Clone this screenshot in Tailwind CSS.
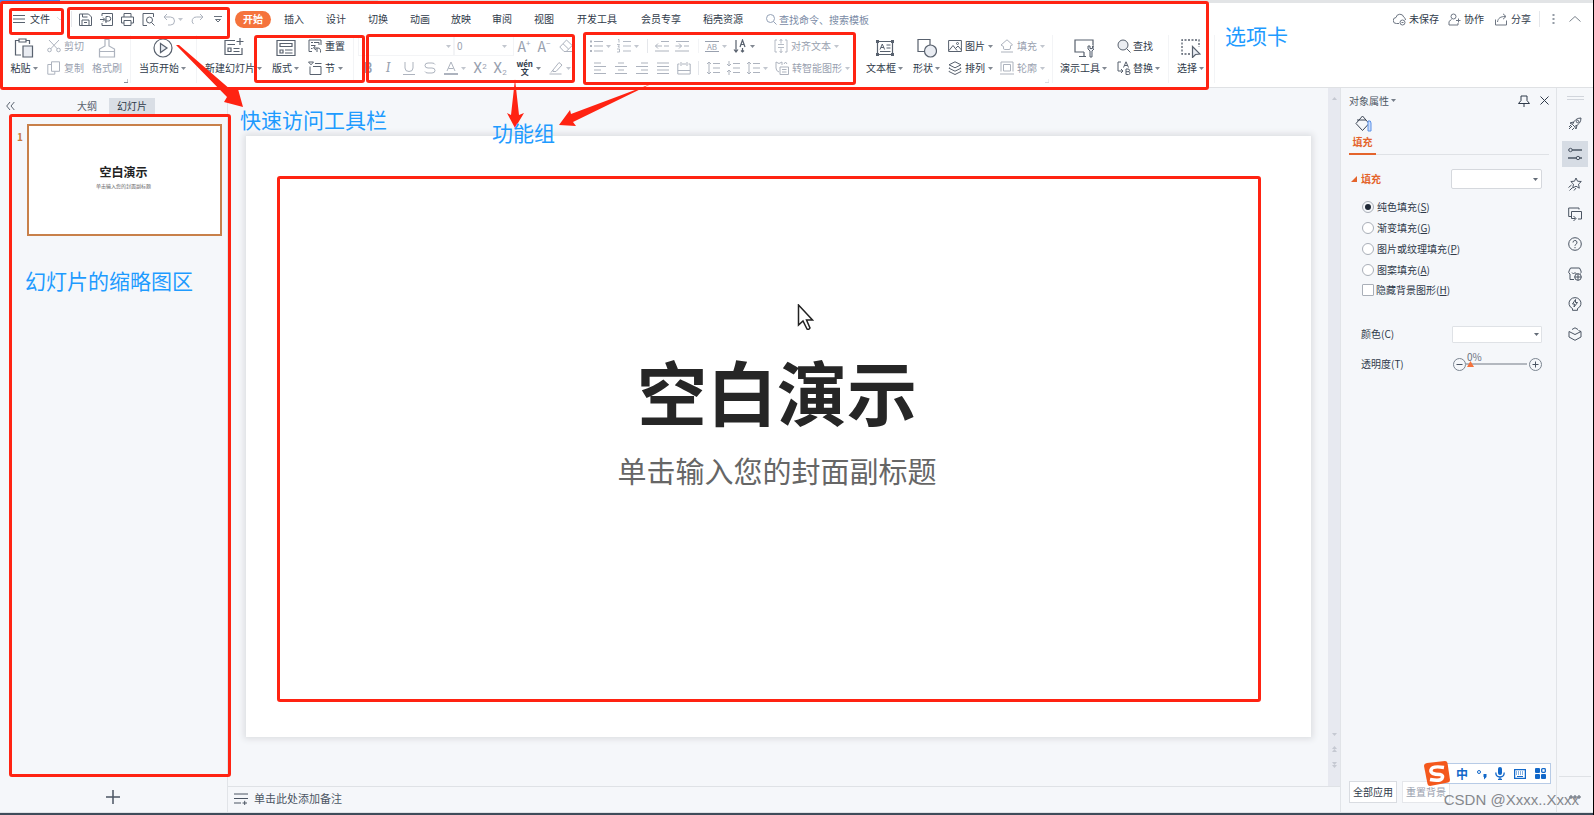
<!DOCTYPE html>
<html lang="zh-CN">
<head>
<meta charset="utf-8">
<title>演示文稿</title>
<script src="https://cdn.jsdelivr.net/npm/@tailwindcss/browser@4"></script>
</head>
<body class="relative flex h-screen flex-col overflow-hidden border-r border-black bg-[#f5f7fa] font-['Noto_Sans_CJK_SC',sans-serif] text-[10px] leading-none text-[#2f3a4a]">

<!-- Icon sheet -->
<svg class="hidden" aria-hidden="true">
  <symbol id="caret" viewBox="0 0 5 3"><path d="M0 0h5L2.500 3z" fill="currentColor" fill-opacity=".75"/></symbol>
  <symbol id="menu" viewBox="0 0 12 10"><path d="M0 1.500h12M0 5h12M0 8.500h12" fill="none" stroke="currentColor"/></symbol>
  <symbol id="save" viewBox="0 0 13 13"><path d="M.5 1h9l3 3v8.500H.5zM3 12.500V7h7v5.500M3.500 1v3h5M5 9.500h3" fill="none" stroke="currentColor"/></symbol>
  <symbol id="pdf" viewBox="0 0 13 13"><path d="M2 3V.5h10.500v12H2V10M0 6.500h4.500M3 4.500l2 2-2 2M6 10V3.500h2.500a2 2 0 0 1 0 4.500H5" fill="none" stroke="currentColor"/></symbol>
  <symbol id="print" viewBox="0 0 13 13"><path d="M3 4V.5h7V4M3 10H.5V4h12v6H10M3 7.500h7v5H3z" fill="none" stroke="currentColor"/></symbol>
  <symbol id="preview" viewBox="0 0 13 13"><path d="M11.500 4V.5H1v12h4M9.500 9.500l3 3" fill="none" stroke="currentColor"/><circle cx="7.500" cy="7" r="3" fill="none" stroke="currentColor"/></symbol>
  <symbol id="undo" viewBox="0 0 13 13"><path d="M4 1L1 4l3 3M1 4h6.500a4 4 0 0 1 0 8H5" fill="none" stroke="currentColor"/></symbol>
  <symbol id="redo" viewBox="0 0 13 13"><path d="M9 1l3 3-3 3M12 4H5.500a4 4 0 0 0-3 7" fill="none" stroke="currentColor"/></symbol>
  <symbol id="more" viewBox="0 0 8 8"><path d="M0 1.500h8M1.500 4.500h5L4 7z" fill="none" stroke="currentColor" stroke-width=".9"/></symbol>
  <symbol id="search" viewBox="0 0 14 14"><circle cx="6" cy="6" r="5" fill="#e8ebef" stroke="currentColor"/><path d="M9.700 9.700L13.500 13.500" stroke="currentColor"/></symbol>
  <symbol id="cloud" viewBox="0 0 13 13"><path d="M6 10.500H3.500a3 3 0 0 1-.5-6 4 4 0 0 1 7.800-.3A3 3 0 0 1 12.500 7" fill="none" stroke="currentColor"/><circle cx="9.500" cy="9.500" r="2.500" fill="none" stroke="currentColor"/><path d="M8.500 9.500h2" stroke="currentColor"/></symbol>
  <symbol id="people" viewBox="0 0 13 13"><circle cx="5.500" cy="3.500" r="2.500" fill="none" stroke="currentColor"/><path d="M3.500 6.500L1 8.500v3.500h9V10M8 7.500h4.500M10.500 5.500v4" fill="none" stroke="currentColor"/></symbol>
  <symbol id="share" viewBox="0 0 13 13"><path d="M.5 6.500V12h11V7.500M2.500 9c.5-4 3-5.500 8-5.500M8 .8l3 2.700-3 2.700" fill="none" stroke="currentColor"/></symbol>
  <symbol id="paste" viewBox="0 0 20 20"><path d="M7 17H1.500V2.500H5M12 2.500h3.500V6M5 1h7v3H5z" fill="none" stroke="currentColor" stroke-width="1.200"/><path d="M9 8h9.500v11H9z" fill="#e4e8f0" stroke="currentColor" stroke-width="1.200"/></symbol>
  <symbol id="cut" viewBox="0 0 14 14"><path d="M2 1l8.500 9M12 1L3.500 10" fill="none" stroke="currentColor"/><circle cx="2.500" cy="11" r="1.800" fill="none" stroke="currentColor"/><circle cx="11.500" cy="11" r="1.800" fill="none" stroke="currentColor"/></symbol>
  <symbol id="copy" viewBox="0 0 14 14"><path d="M4 3.500H.8v9.700h7V10.500M4.500.8h8v9.500h-8z" fill="none" stroke="currentColor"/></symbol>
  <symbol id="brush" viewBox="0 0 20 20"><path d="M8 8V1.500h4V8l5.500 3v8h-15v-8zM2.500 13.500h15" fill="none" stroke="currentColor" stroke-width="1.200"/></symbol>
  <symbol id="play" viewBox="0 0 20 20"><circle cx="10" cy="10" r="9" fill="none" stroke="currentColor" stroke-width="1.200"/><path d="M7.500 5.500l6.500 4.500-6.500 4.500z" fill="#e4e8f0" stroke="currentColor" stroke-width="1.200"/></symbol>
  <symbol id="newslide" viewBox="0 0 20 20"><path d="M11 2.500H1v14h17V10M3.500 6.500H11M4 10h3v3.500H4zM9.500 10.500h6M9.500 13.500h6M16 0v7M12.500 3.500h7" fill="none" stroke="currentColor" stroke-width="1.200"/></symbol>
  <symbol id="layout" viewBox="0 0 20 20"><path d="M1 2.500h18v15H1zM4 5.500h12v3H4zM4 12h3v3H4zM9 12h7.500M9 15h7.500" fill="none" stroke="currentColor" stroke-width="1.200"/></symbol>
  <symbol id="reset" viewBox="0 0 14 14"><path d="M4 12.500H1V1h12v5M3 3.500h2M6 3.500h5V6M3 6.500h4M3 9.500h1.500M7.500 6.500L5.500 9l2.500 2M6 9h4q3 0 2.500 4.500M9 13V9" fill="none" stroke="currentColor"/></symbol>
  <symbol id="section" viewBox="0 0 14 14"><path d="M.5 1h5L3 3.800zM7 2.500h6.500M2 5.500v8h11v-8H5" fill="none" stroke="currentColor"/></symbol>
  <symbol id="eraser" viewBox="0 0 14 14"><path d="M.8 8L7.500 1l5.700 5.500-6 6H5zM4 4.700l5.700 5.500M5 12.500h8" fill="none" stroke="currentColor"/></symbol>
  <symbol id="marker" viewBox="0 0 14 14"><path d="M4 9l6-7.500L13 4 7 10.500H4zM.5 13h12M4 9l-2 2.500" fill="none" stroke="currentColor"/></symbol>
  <symbol id="underline" viewBox="0 0 14 14"><path d="M3 1v6q0 3.500 4 3.500T11 7V1M1 13.500h12" fill="none" stroke="currentColor"/></symbol>
  <symbol id="strike" viewBox="0 0 14 14"><path d="M12 3.500Q11.500 2 9 2H5Q2 2 2 4.500T5 7h4q3 0 3 2.500T9 12H5q-2.500 0-3-1.500" fill="none" stroke="currentColor"/></symbol>
  <symbol id="fontcolor" viewBox="0 0 14 14"><path d="M3 10L7 1l4 9M4.500 7.500h5" fill="none" stroke="currentColor"/><path d="M0 12h14v2H0z" fill="currentColor"/></symbol>
  <symbol id="bullets" viewBox="0 0 14 14"><path d="M5 2.500h9M5 7h9M5 12h9" stroke="currentColor"/><path d="M1 1.500h2v2H1zM1 6h2v2H1zM1 11h2v2H1z" fill="currentColor"/></symbol>
  <symbol id="numbers" viewBox="0 0 14 14"><path d="M6 2.500h8M6 7h8M6 12h8M1 .5h1v3M0 5.500h2.500L1 8h2M0 10h2.500v3H0" fill="none" stroke="currentColor" stroke-width=".9"/></symbol>
  <symbol id="outdent" viewBox="0 0 14 14"><path d="M6 2.500h8M0 12h14M9 7h5M.5 7h6.500M3 4.500L.5 7 3 9.500" fill="none" stroke="currentColor"/></symbol>
  <symbol id="indent" viewBox="0 0 14 14"><path d="M1 2.500h13M0 12h14M9 7h5M.5 7h6M4 4.500L6.500 7 4 9.500" fill="none" stroke="currentColor"/></symbol>
  <symbol id="sort" viewBox="0 0 14 14"><path d="M3 1v12M1 10.500l2 2.500 2-2.500M7 8l2.500-7L12 8M8 5.500h3.500M9.500 9v4M8 11.500l1.500 1.500 1.500-1.500" fill="none" stroke="currentColor" stroke-width="1.200"/></symbol>
  <symbol id="valign" viewBox="0 0 14 14"><path d="M3 1H1v12h2M11 1h2v12h-2M7 0v4.500M5.500 2L7 .5 8.500 2M7 9.500V14M5.500 12L7 13.500 8.500 12M4 5.500h6M4 8.500h6" fill="none" stroke="currentColor" stroke-width=".9"/></symbol>
  <symbol id="left" viewBox="0 0 14 14"><path d="M1 2h7M1 5.500h12M1 9h7M1 12.500h12" stroke="currentColor"/></symbol>
  <symbol id="center" viewBox="0 0 14 14"><path d="M4 2h6M1 5.500h12M4 9h6M1 12.500h12" stroke="currentColor"/></symbol>
  <symbol id="right" viewBox="0 0 14 14"><path d="M6 2h7M1 5.500h12M6 9h7M1 12.500h12" stroke="currentColor"/></symbol>
  <symbol id="justify" viewBox="0 0 14 14"><path d="M1 2h12M1 5.500h12M1 9h12M1 12.500h12" stroke="currentColor"/></symbol>
  <symbol id="distribute" viewBox="0 0 14 14"><path d="M2.500 3H.8v10h12.400V3h-1.700M.8 9.500h12.400M5 3h4M4 1v4M10 1v4" fill="none" stroke="currentColor"/></symbol>
  <symbol id="spacing" viewBox="0 0 14 14"><path d="M7 2.500h7M7 7h7M7 11.500h7M3 1v12M1 3l2-2 2 2M1 11l2 2 2-2" fill="none" stroke="currentColor"/></symbol>
  <symbol id="spacing2" viewBox="0 0 14 14"><path d="M7 2.500h7M7 7h7M7 11.500h7M3 0v5M1 3l2 2 2-2M3 14V9M1 11l2-2 2 2" fill="none" stroke="currentColor"/></symbol>
  <symbol id="smart" viewBox="0 0 14 14"><path d="M4 11Q1 10 1 7V1l3 1.500L7 1v3M5 6h8.500v7.500H5zM7 8.500h4.500M7 11h4.500M9 3l1.500-2L12 3" fill="none" stroke="currentColor"/></symbol>
  <symbol id="textbox" viewBox="0 0 20 20"><path d="M2.500 3.500h15v13h-15z" fill="none" stroke="currentColor" stroke-width="1.200"/><path d="M1 2h3v3H1zM16 2h3v3h-3zM1 15h3v3H1zM16 15h3v3h-3z" fill="currentColor"/><path d="M5 11.500L7.300 6l2.300 5.500M6 9.500h3M11.500 7h4M11.500 10h4M5 13.500h10.500" fill="none" stroke="currentColor"/></symbol>
  <symbol id="shape" viewBox="0 0 20 20"><path d="M1 1.500h12v12H1z" fill="none" stroke="currentColor" stroke-width="1.200"/><circle cx="13.500" cy="13" r="6" fill="#e4e8f0" stroke="currentColor" stroke-width="1.200"/></symbol>
  <symbol id="picture" viewBox="0 0 14 14"><path d="M.6 1.500h12.800v11H.6zM1 11.500l4-5 4 5M8 9l2-2 3.500 4" fill="none" stroke="currentColor"/><circle cx="9.500" cy="4.500" r="1" fill="none" stroke="currentColor"/></symbol>
  <symbol id="layers" viewBox="0 0 14 14"><path d="M7 .8l6 3-6 3-6-3zM1.500 6.500L1 7.200l6 3 6-3-.5-.7M1.500 9.800l-.5.700 6 3 6-3-.5-.7" fill="none" stroke="currentColor"/></symbol>
  <symbol id="fill" viewBox="0 0 14 14"><path d="M5 2.500L7 .8l5.500 5-2 1V9q0 1.500-1.500 1.500H4.500Q3.500 10.500 3.500 9V7.500L1 6zM1 13h12" fill="none" stroke="currentColor"/></symbol>
  <symbol id="outline" viewBox="0 0 14 14"><path d="M1 10.500V1h12v9.500M3.500 10V3.500h7V10zM0 13h14" fill="none" stroke="currentColor"/></symbol>
  <symbol id="tools" viewBox="0 0 20 20"><path d="M10 14H1V2h18v5M10 14v4.500M5 18.500h7" fill="none" stroke="currentColor" stroke-width="1.200"/><path d="M14 8v3l2 2v6h2v-6l2-2V8l-1.500 0v2.500h-2.500V8z" fill="#e4e8f0" stroke="currentColor"/></symbol>
  <symbol id="replace" viewBox="0 0 14 14"><path d="M4 1H1v9h5M4 8l2 2-2 2M6.500 6.500L9 .8l2.500 5.700M7.300 4.500h3.400M9 8v5.500h2.500q1.500 0 1.500-1.400t-1.500-1.400H9M9 8h2q1.500 0 1.500 1.300T11 10.700" fill="none" stroke="currentColor"/></symbol>
  <symbol id="select" viewBox="0 0 20 20"><path d="M9 16H1V2h17v7" fill="none" stroke="currentColor" stroke-width="1.300" stroke-dasharray="2 1.500"/><path d="M11.500 8.500v11l3-3 4.500-.5z" fill="#e4e8f0" stroke="currentColor" stroke-width="1.200"/></symbol>
  <symbol id="corner" viewBox="0 0 4 4"><path d="M4 0v3.500H0" fill="none" stroke="currentColor"/></symbol>
</svg>

<!-- Window strip -->
<div class="flex h-[3px] shrink-0 bg-[#e2e4e6]"><div class="w-15 bg-[#4a86f0]"></div><div class="w-[318px] bg-[#d4d8dc]"></div></div>

<header class="shrink-0 border-b border-[#dfe1e4] bg-white [&_svg]:opacity-80">
  <!-- Menu and tabs -->
  <div class="flex h-8 items-center pl-[13px]">
    <button class="flex items-center gap-[5px]"><svg class="h-[10px] w-3"><use href="#menu"/></svg>文件</button>
    <svg class="ml-[7px] h-1 w-[6px] text-gray-300" viewBox="0 0 6 4"><path d="M0 0l3 3 3-3" fill="none" stroke="currentColor"/></svg>
    <i class="ml-2 h-4 w-px bg-gray-200"></i>
    <div class="ml-[7px] flex items-center gap-2">
      <button aria-label="保存"><svg class="block size-[13px]"><use href="#save"/></svg></button>
      <button aria-label="输出为PDF"><svg class="block size-[13px]"><use href="#pdf"/></svg></button>
      <button aria-label="打印"><svg class="block size-[13px]"><use href="#print"/></svg></button>
      <button aria-label="打印预览"><svg class="block size-[13px]"><use href="#preview"/></svg></button>
      <button aria-label="撤销" class="flex items-center gap-[2px] text-gray-400"><svg class="block size-[13px]"><use href="#undo"/></svg><svg class="h-[3px] w-[5px]"><use href="#caret"/></svg></button>
      <button aria-label="恢复" class="text-gray-400"><svg class="block size-[13px]"><use href="#redo"/></svg></button>
    </div>
    <button aria-label="自定义" class="ml-[10px]"><svg class="block size-2"><use href="#more"/></svg></button>
    <nav class="ml-[13px] flex items-center">
      <button class="mr-[2px] h-[17px] w-9 rounded-full bg-[#f5733c] font-bold text-white">开始</button>
      <button class="px-[11px]">插入</button><button class="px-[11px]">设计</button><button class="px-[11px]">切换</button><button class="px-[11px]">动画</button><button class="px-[10px]">放映</button><button class="px-[11px]">审阅</button><button class="px-[11px]">视图</button><button class="px-[12px]">开发工具</button><button class="px-[12px]">会员专享</button><button class="px-[10px]">稻壳资源</button>
    </nav>
    <label class="ml-[13px] flex items-center gap-[2px] text-[#7a8aa5]"><svg class="size-[11px]" viewBox="0 0 11 11"><circle cx="4.500" cy="4.500" r="4" fill="none" stroke="currentColor"/><path d="M7.500 7.500l3 3" stroke="currentColor"/></svg><input aria-label="查找" placeholder="查找命令、搜索模板" class="w-28 outline-none placeholder:text-[#7a8aa5]"></label>
    <div class="ml-auto flex items-center pr-3">
      <button class="flex items-center gap-[3px]"><svg class="size-[13px] text-gray-600"><use href="#cloud"/></svg>未保存</button>
      <button class="ml-[9px] flex items-center gap-[3px]"><svg class="size-[13px] text-gray-600"><use href="#people"/></svg>协作</button>
      <button class="ml-[11px] flex items-center gap-[3px]"><svg class="size-[13px] text-gray-600"><use href="#share"/></svg>分享</button>
      <i class="ml-2 h-4 w-px bg-gray-200"></i>
      <button aria-label="更多" class="ml-3"><svg class="block h-3 w-[3px]" viewBox="0 0 3 12"><path d="M.5 1h2v2h-2zM.5 5h2v2h-2zM.5 9h2v2h-2z" fill="#7b8490"/></svg></button>
      <button aria-label="折叠功能区" class="ml-[14px]"><svg class="block h-[6px] w-3" viewBox="0 0 12 6"><path d="M.5 5.500L6 .5l5.500 5" fill="none" stroke="#5b6470"/></svg></button>
    </div>
  </div>

  <!-- Ribbon -->
  <div class="flex h-[52px] pl-2">
    <button class="flex w-8 flex-col items-center pt-[3px]"><svg class="size-5"><use href="#paste"/></svg><span class="flex h-5 items-center gap-[2px]">粘贴<svg class="h-[3px] w-[5px]"><use href="#caret"/></svg></span></button>
    <div class="ml-[7px] flex flex-col text-gray-400">
      <button class="flex h-[22px] items-center gap-[3px]"><svg class="size-[14px]"><use href="#cut"/></svg>剪切</button>
      <button class="flex h-[22px] items-center gap-[3px]"><svg class="size-[14px]"><use href="#copy"/></svg>复制</button>
    </div>
    <button class="ml-2 flex flex-col items-center pt-[3px] text-gray-400"><svg class="size-5"><use href="#brush"/></svg><span class="flex h-5 items-center">格式刷</span></button>
    <div class="flex h-12 w-2 items-end pl-[2px]"><svg class="size-1 text-gray-500"><use href="#corner"/></svg></div><i class="h-12 w-px bg-gray-100"></i>
    <button class="ml-2 flex flex-col items-center pt-[3px]"><svg class="size-5"><use href="#play"/></svg><span class="flex h-5 items-center gap-[2px]">当页开始<svg class="h-[3px] w-[5px]"><use href="#caret"/></svg></span></button>
    <i class="ml-[10px] h-12 w-px bg-gray-100"></i>
    <button class="ml-2 flex flex-col items-center pt-[3px]"><svg class="size-5"><use href="#newslide"/></svg><span class="flex h-5 items-center gap-[2px]">新建幻灯片<svg class="h-[3px] w-[5px]"><use href="#caret"/></svg></span></button>
    <button class="ml-[10px] flex flex-col items-center pt-[3px]"><svg class="size-5"><use href="#layout"/></svg><span class="flex h-5 items-center gap-[2px]">版式<svg class="h-[3px] w-[5px]"><use href="#caret"/></svg></span></button>
    <div class="ml-[9px] flex flex-col">
      <button class="flex h-[22px] items-center gap-[3px]"><svg class="size-[14px]"><use href="#reset"/></svg>重置</button>
      <button class="flex h-[22px] items-center gap-[3px]"><svg class="size-[14px]"><use href="#section"/></svg>节<svg class="h-[3px] w-[5px]"><use href="#caret"/></svg></button>
    </div>
    <i class="ml-2 h-12 w-px bg-gray-100"></i>

    <!-- Font group -->
    <div class="ml-1 w-[220px] text-gray-400">
      <div class="flex h-[22px] items-center">
        <label class="relative flex h-5 w-24 items-center border border-gray-100"><select aria-label="字体" class="h-full w-full appearance-none"><option></option></select><svg class="pointer-events-none absolute right-[2px] h-[3px] w-[5px]"><use href="#caret"/></svg></label>
        <label class="relative flex h-5 w-15 items-center border border-gray-100"><select aria-label="字号" class="h-full w-full appearance-none pl-[2px]"><option>0</option></select><svg class="pointer-events-none absolute right-[6px] h-[3px] w-[5px]"><use href="#caret"/></svg></label>
        <button aria-label="增大字号" class="flex w-5 items-start justify-center text-[14px]">A<span class="text-[8px]">+</span></button>
        <button aria-label="减小字号" class="flex w-5 items-start justify-center text-[14px]">A<span class="text-[8px]">−</span></button>
        <button aria-label="清除格式" class="flex w-6 justify-center"><svg class="size-[14px]"><use href="#eraser"/></svg></button>
      </div>
      <div class="flex h-[22px] items-center font-[Roboto] text-[14px]">
        <button class="w-5 font-medium">B</button><button class="w-5 font-serif italic">I</button>
        <button aria-label="下划线" class="flex w-[21px] justify-center"><svg class="size-[14px]"><use href="#underline"/></svg></button>
        <button aria-label="删除线" class="flex w-[21px] justify-center"><svg class="size-[14px]"><use href="#strike"/></svg></button>
        <button aria-label="字体颜色" class="flex w-[30px] items-center justify-center gap-[3px]"><svg class="size-[14px]"><use href="#fontcolor"/></svg><svg class="h-[3px] w-[5px]"><use href="#caret"/></svg></button>
        <button class="w-5">X<sup class="text-[8px]">2</sup></button><button class="w-5">X<sub class="text-[8px]">2</sub></button>
        <button class="flex w-9 items-center justify-end gap-[3px] pr-[5px] text-[#2f3a4a]"><span class="flex flex-col items-center font-['Noto_Sans_CJK_SC'] text-[8px] leading-[8px] font-bold"><span>wén</span><span>文</span></span><svg class="h-[3px] w-[5px]"><use href="#caret"/></svg></button>
        <button aria-label="突出显示" class="flex w-7 items-center justify-center gap-[3px]"><svg class="size-[14px]"><use href="#marker"/></svg><svg class="h-[3px] w-[5px]"><use href="#caret"/></svg></button>
      </div>
    </div>

    <!-- Paragraph group -->
    <div class="ml-2 text-gray-400">
      <div class="flex h-[22px] items-center">
        <button aria-label="项目符号" class="flex w-7 items-center justify-center gap-[3px]"><svg class="size-[14px]"><use href="#bullets"/></svg><svg class="h-[3px] w-[5px]"><use href="#caret"/></svg></button>
        <button aria-label="编号" class="flex w-7 items-center justify-center gap-[3px]"><svg class="size-[14px]"><use href="#numbers"/></svg><svg class="h-[3px] w-[5px]"><use href="#caret"/></svg></button>
        <i class="ml-[5px] h-[14px] w-px bg-gray-200"></i>
        <button aria-label="减少缩进" class="ml-[3px] flex w-[21px] justify-center"><svg class="size-[14px]"><use href="#outdent"/></svg></button>
        <button aria-label="增加缩进" class="flex w-5 justify-center"><svg class="size-[14px]"><use href="#indent"/></svg></button>
        <i class="ml-[6px] h-[14px] w-px bg-gray-100"></i>
        <button aria-label="字符间距" class="ml-[3px] flex w-7 items-center justify-center gap-[3px]"><span class="w-[14px] border-y text-[8px] leading-[9px]">AB</span><svg class="h-[3px] w-[5px]"><use href="#caret"/></svg></button>
        <button aria-label="文字方向" class="flex w-7 items-center justify-center gap-[3px] text-[#2f3a4a]"><svg class="size-[14px]"><use href="#sort"/></svg><svg class="h-[3px] w-[5px]"><use href="#caret"/></svg></button>
        <button class="ml-4 flex items-center gap-[3px]"><svg class="size-[14px]"><use href="#valign"/></svg>对齐文本<svg class="h-[3px] w-[5px]"><use href="#caret"/></svg></button>
      </div>
      <div class="flex h-[22px] items-center pl-[3px]">
        <button aria-label="左对齐" class="flex w-[21px] justify-center"><svg class="size-[14px]"><use href="#left"/></svg></button>
        <button aria-label="居中" class="flex w-[21px] justify-center"><svg class="size-[14px]"><use href="#center"/></svg></button>
        <button aria-label="右对齐" class="flex w-[21px] justify-center"><svg class="size-[14px]"><use href="#right"/></svg></button>
        <button aria-label="两端对齐" class="flex w-[21px] justify-center"><svg class="size-[14px]"><use href="#justify"/></svg></button>
        <button aria-label="分散对齐" class="flex w-[21px] justify-center"><svg class="size-[14px]"><use href="#distribute"/></svg></button>
        <i class="ml-1 h-[14px] w-px bg-gray-200"></i>
        <button aria-label="增大段距" class="ml-[3px] flex w-[21px] justify-center"><svg class="size-[14px]"><use href="#spacing"/></svg></button>
        <button aria-label="减小段距" class="flex w-5 justify-center"><svg class="size-[14px]"><use href="#spacing2"/></svg></button>
        <button aria-label="行距" class="flex w-7 items-center justify-center gap-[3px]"><svg class="size-[14px]"><use href="#spacing"/></svg><svg class="h-[3px] w-[5px]"><use href="#caret"/></svg></button>
        <button class="ml-1 flex items-center gap-[3px]"><svg class="size-[14px]"><use href="#smart"/></svg>转智能图形<svg class="h-[3px] w-[5px]"><use href="#caret"/></svg></button>
      </div>
    </div>

    <!-- Drawing group -->
    <button class="ml-4 flex flex-col items-center pt-[3px]"><svg class="size-5"><use href="#textbox"/></svg><span class="flex h-5 items-center gap-[2px]">文本框<svg class="h-[3px] w-[5px]"><use href="#caret"/></svg></span></button>
    <button class="ml-[10px] flex flex-col items-center pt-[3px]"><svg class="size-5"><use href="#shape"/></svg><span class="flex h-5 items-center gap-[2px]">形状<svg class="h-[3px] w-[5px]"><use href="#caret"/></svg></span></button>
    <div class="ml-2">
      <button class="flex h-[22px] items-center gap-[3px]"><svg class="size-[14px]"><use href="#picture"/></svg>图片<svg class="h-[3px] w-[5px]"><use href="#caret"/></svg></button>
      <button class="flex h-[22px] items-center gap-[3px]"><svg class="size-[14px]"><use href="#layers"/></svg>排列<svg class="h-[3px] w-[5px]"><use href="#caret"/></svg></button>
    </div>
    <div class="ml-[7px] text-gray-400">
      <button class="flex h-[22px] items-center gap-[3px]"><svg class="size-[14px]"><use href="#fill"/></svg>填充<svg class="h-[3px] w-[5px]"><use href="#caret"/></svg></button>
      <button class="flex h-[22px] items-center gap-[3px]"><svg class="size-[14px]"><use href="#outline"/></svg>轮廓<svg class="h-[3px] w-[5px]"><use href="#caret"/></svg></button>
    </div>
    <div class="flex h-12 w-[7px] items-end"><svg class="size-1 text-gray-300"><use href="#corner"/></svg></div><i class="h-12 w-px bg-gray-100"></i>
    <button class="ml-[7px] flex flex-col items-center pt-[3px]"><svg class="size-5"><use href="#tools"/></svg><span class="flex h-5 items-center gap-[2px]">演示工具<svg class="h-[3px] w-[5px]"><use href="#caret"/></svg></span></button>
    <div class="ml-[10px]">
      <button class="flex h-[22px] items-center gap-[2px]"><svg class="size-[14px]"><use href="#search"/></svg>查找</button>
      <button class="flex h-[22px] items-center gap-[2px]"><svg class="size-[14px]"><use href="#replace"/></svg>替换<svg class="h-[3px] w-[5px]"><use href="#caret"/></svg></button>
    </div>
    <i class="ml-[8px] h-12 w-px bg-gray-100"></i>
    <button class="ml-2 flex flex-col items-center pt-[3px]"><svg class="size-5"><use href="#select"/></svg><span class="flex h-5 items-center gap-[2px]">选择<svg class="h-[3px] w-[5px]"><use href="#caret"/></svg></span></button>
    <i class="ml-[10px] h-12 w-px bg-gray-100"></i>
  </div>
</header>

<div class="flex min-h-0 flex-1 border-b border-[#dfe2e6]">
  <!-- Slide list -->
  <aside class="flex w-[228px] shrink-0 flex-col border-r border-[#e1e4e8]">
    <div class="flex h-9 items-center pl-[6px]">
      <button aria-label="收起"><svg class="block h-2 w-[9px]" viewBox="0 0 9 8"><path d="M4 0L.7 4 4 8M8.300 0L5 4l3.300 4" fill="none" stroke="#5b6470"/></svg></button>
      <button class="ml-[62px] text-[#5b6470]">大纲</button>
      <button class="ml-3 h-4 w-[46px] bg-[#d9dee5]">幻灯片</button>
    </div>
    <div class="flex pl-[17px]">
      <span class="w-[10px] pt-2 font-bold text-[#c97a3a]">1</span>
      <div class="flex h-28 w-[195px] flex-col items-center border-2 border-[#c8804a] bg-white pt-10 pr-[2px]">
        <div class="text-[12px] font-bold text-[#222]">空白演示</div>
        <div class="mt-[5px] text-[5px] text-[#666]">单击输入您的封面副标题</div>
      </div>
    </div>
    <button aria-label="新建幻灯片" class="mt-auto flex h-[30px] items-center justify-center pr-[2px]"><svg class="size-[14px]" viewBox="0 0 14 14"><path d="M7 0v14M0 7h14" stroke="#4b5563" stroke-width="1.500"/></svg></button>
  </aside>

  <!-- Editing area -->
  <main class="flex min-w-0 flex-1 flex-col">
    <div class="flex min-h-0 flex-1">
      <div class="flex flex-1 pt-12 pr-[17px] pb-[49px] pl-[18px]">
        <section class="flex flex-1 flex-col items-center bg-white pt-[220px] pr-[3px] shadow-[0_0_6px_2px_#dcdee1]">
          <h1 class="text-[70px] font-bold text-[#262626]">空白演示</h1>
          <p class="mt-[30px] text-[29px] text-[#666]">单击输入您的封面副标题</p>
        </section>
      </div>
      <div class="flex w-3 flex-col items-center bg-[#e7e9f0] pt-[9px] pb-[18px] text-[#b9bec8]">
        <svg class="h-[3px] w-[5px] rotate-180"><use href="#caret"/></svg>
        <svg class="mt-auto h-[3px] w-[5px]"><use href="#caret"/></svg>
        <svg class="mt-[10px] h-[3px] w-[5px] rotate-180"><use href="#caret"/></svg><svg class="h-[3px] w-[5px] rotate-180"><use href="#caret"/></svg>
        <svg class="mt-[10px] h-[3px] w-[5px]"><use href="#caret"/></svg><svg class="h-[3px] w-[5px]"><use href="#caret"/></svg>
      </div>
    </div>
    <div class="flex h-[26px] shrink-0 items-center gap-[6px] border-t border-[#dfe2e6] pb-[2px] pl-[6px] text-[11px] text-[#4b5563]">
      <svg class="h-3 w-[14px]" viewBox="0 0 14 12"><path d="M0 1h14M0 5.500h14M0 10h7M8.500 10H13M10.700 7.800v4.400" stroke="currentColor"/></svg>单击此处添加备注
    </div>
  </main>

  <!-- Object properties -->
  <aside class="flex w-[217px] shrink-0 flex-col border-x border-[#e1e4e8] pr-[7px] pl-2">
    <div class="flex h-[25px] items-center">
      <button class="flex items-center gap-[2px] text-[#4b5563]">对象属性<svg class="h-[3px] w-[5px]"><use href="#caret"/></svg></button>
      <button aria-label="固定" class="ml-auto"><svg class="block h-3 w-3" viewBox="0 0 12 12"><path d="M3 1h6v4.500L11.500 8.500H.5L3 5.500zM6 8.500V12" fill="none" stroke="currentColor"/></svg></button>
      <button aria-label="关闭" class="ml-[10px]"><svg class="block size-[9px]" viewBox="0 0 9 9"><path d="M.5.5l8 8M8.500.5l-8 8" stroke="currentColor"/></svg></button>
    </div>
    <div class="flex h-[42px] border-b border-[#dfe2e6]">
      <button class="-mb-px flex w-[27px] flex-col items-center gap-[5px] border-b-2 border-[#e4642c] pt-[2px] font-bold text-[#e4642c]"><svg class="h-[17px] w-[18px]" viewBox="0 0 18 17"><path d="M8.500 1L2 8.500l6.500 7 6.500-7zM3 5h9" fill="none" stroke="#3b4554"/><path d="M14 6q3-1 3 2v8h-3z" fill="#c9dcfa" stroke="#5c92e8"/></svg>填充</button>
    </div>
    <div class="mt-[14px] flex h-5 items-center pl-[2px]">
      <button class="flex items-center gap-1 font-bold text-[#e4642c]"><svg class="size-[6px]" viewBox="0 0 6 6"><path d="M6 0v6H0z" fill="currentColor"/></svg>填充</button>
      <label class="relative mr-[7px] ml-auto flex items-center"><select aria-label="填充方式" class="h-5 w-[91px] appearance-none rounded-[2px] border border-[#d5d8dd] bg-white"><option></option></select><svg class="pointer-events-none absolute right-1 h-[3px] w-[5px]"><use href="#caret"/></svg></label>
    </div>
    <fieldset class="mt-[7px] flex flex-col pl-[13px]">
      <label class="flex h-[21px] items-center gap-[3px]"><input type="radio" name="f" checked class="size-3 appearance-none rounded-full border border-[#a9afb8] bg-white checked:bg-[#1f2937] checked:bg-clip-content checked:p-[2px]"><span>纯色填充(<u>S</u>)</span></label>
      <label class="flex h-[21px] items-center gap-[3px]"><input type="radio" name="f" class="size-3 appearance-none rounded-full border border-[#a9afb8] bg-white"><span>渐变填充(<u>G</u>)</span></label>
      <label class="flex h-[21px] items-center gap-[3px]"><input type="radio" name="f" class="size-3 appearance-none rounded-full border border-[#a9afb8] bg-white"><span>图片或纹理填充(<u>P</u>)</span></label>
      <label class="flex h-[21px] items-center gap-[3px]"><input type="radio" name="f" class="size-3 appearance-none rounded-full border border-[#a9afb8] bg-white"><span>图案填充(<u>A</u>)</span></label>
      <label class="flex h-5 items-center gap-[2px]"><input type="checkbox" class="size-3 appearance-none rounded-[1px] border border-[#a9afb8] bg-white"><span>隐藏背景图形(<u>H</u>)</span></label>
    </fieldset>
    <div class="mt-[25px] flex h-[18px] items-center pr-[7px] pl-3">
      <label for="color">颜色(C)</label>
      <span class="relative ml-auto flex items-center"><select id="color" class="h-[17px] w-[90px] appearance-none rounded-[1px] border border-[#dfe2e6] bg-white"><option></option></select><svg class="pointer-events-none absolute right-[3px] h-[3px] w-[5px]"><use href="#caret"/></svg></span>
    </div>
    <div class="mt-3 flex h-[18px] items-center pr-[7px] pl-3">
      <label for="alpha">透明度(T)</label>
      <button aria-label="减少" class="ml-auto"><svg class="block size-[13px]" viewBox="0 0 13 13"><circle cx="6.500" cy="6.500" r="6" fill="none" stroke="#7b8490"/><path d="M3.500 6.500h6" stroke="#4b5563"/></svg></button>
      <div class="relative mr-[2px] flex w-[61px] items-center">
        <input id="alpha" type="range" value="0" class="h-[2px] w-full appearance-none bg-[#b3b8bf] [&::-webkit-slider-thumb]:appearance-none">
        <span class="absolute -top-[11px] left-px text-[#6b7280]">0%</span>
        <svg class="pointer-events-none absolute left-px h-[6px] w-[7px]" viewBox="0 0 7 6"><path d="M3.500 0L7 6H0z" fill="#f5733c"/></svg>
      </div>
      <button aria-label="增加"><svg class="block size-[13px]" viewBox="0 0 13 13"><circle cx="6.500" cy="6.500" r="6" fill="none" stroke="#7b8490"/><path d="M3.500 6.500h6M6.500 3.500v6" stroke="#4b5563"/></svg></button>
    </div>
    <div class="mt-auto mb-[9px] flex gap-[5px]">
      <button class="h-[22px] w-12 border border-[#d9dce1] bg-white">全部应用</button>
      <button class="h-[22px] w-12 border border-[#e5e7eb] bg-white text-gray-400">重置背景</button>
    </div>
  </aside>

  <!-- Side rail -->
  <nav class="flex w-9 shrink-0 flex-col items-center pt-2 text-[#4b5563]">
    <div class="h-1 w-[17px] border-y border-gray-300"></div>
    <div class="mt-[11px] flex flex-col gap-1">
      <button aria-label="模板" class="flex size-[26px] items-center justify-center"><svg class="size-[14px]" viewBox="0 0 14 14"><path d="M4.500 7.500Q7 1 13 1q0 6-6.500 8.500zM5.500 5L2 6l2.500 1.500M9 8.500L8 12 6.500 9.500M4 9L1 12M3 8l-2 2M6 11l-2 2" fill="none" stroke="currentColor"/><circle cx="9.500" cy="4.500" r="1.200" fill="none" stroke="currentColor"/></svg></button>
      <button aria-label="属性" class="flex size-[26px] items-center justify-center bg-[#d6dce4]"><svg class="size-[14px]" viewBox="0 0 14 14"><path d="M4 3h10M0 11h8M12 11h2M0 3h.5" stroke="currentColor" stroke-width="1.300"/><circle cx="2.500" cy="3" r="1.700" fill="none" stroke="currentColor"/><circle cx="10" cy="11" r="1.700" fill="none" stroke="currentColor"/></svg></button>
      <button aria-label="动画" class="flex size-[26px] items-center justify-center"><svg class="size-[14px]" viewBox="0 0 14 14"><path d="M8 1l1.500 3.200 3.800.3-2.800 2.700.8 4L8 9.200 4.700 11l.8-3.800L2.800 4.500l3.700-.3zM3.500 8L.5 10.500M4 11l-2.500 2.500M8 11l-2 2.500" fill="none" stroke="currentColor"/></svg></button>
      <button aria-label="切换" class="flex size-[26px] items-center justify-center"><svg class="size-[14px]" viewBox="0 0 14 14"><path d="M3.500 9.500H.7V1H11v1.500M7.500 11.500H3.500V4.500h10v7.500H10M5.500 9l2.500 2.500L5.500 14" fill="none" stroke="currentColor"/></svg></button>
      <button aria-label="帮助" class="flex size-[26px] items-center justify-center"><svg class="size-[14px]" viewBox="0 0 14 14"><circle cx="7" cy="7" r="6.300" fill="none" stroke="currentColor"/><path d="M5 5.500a2 2 0 1 1 2.800 1.800Q7 7.800 7 8.800M7 10v1.200" fill="none" stroke="currentColor"/></svg></button>
      <button aria-label="资源" class="flex size-[26px] items-center justify-center"><svg class="size-[14px]" viewBox="0 0 14 14"><path d="M6 12.500H2V7Q0 6 1 4l1.500-3h9L13 4q.5 1.500-.5 2.500M4 5.500l1.500 1.500L7 5.500 8.500 7" fill="none" stroke="currentColor"/><circle cx="10" cy="10" r="3.300" fill="none" stroke="currentColor"/><path d="M6.700 10h6.600M10 6.700v6.600" stroke="currentColor"/></svg></button>
      <button aria-label="灵感" class="flex size-[26px] items-center justify-center"><svg class="size-[14px]" viewBox="0 0 14 14"><path d="M4.500 11.500a6 5.700 0 1 1 5 0V13.300h-5zM7.500 2.500L4.500 7h2L6 10l3.500-4.500H7.500z" fill="none" stroke="currentColor"/></svg></button>
      <button aria-label="工具" class="flex size-[26px] items-center justify-center"><svg class="size-[14px]" viewBox="0 0 14 14"><path d="M1 4.500l6 3 6-3V10l-6 3.300L1 10zM4 2.500L7 .8l3 1.700M10.500 3.500L13 4.500" fill="none" stroke="currentColor"/></svg></button>
    </div>
    <div class="mt-auto flex h-9 w-8 items-center justify-center border-t border-[#dfe2e6] pt-1"><svg class="h-1 w-3" viewBox="0 0 12 4"><g fill="none" stroke="#4b5563"><circle cx="2" cy="2" r="1.200"/><circle cx="6" cy="2" r="1.200"/><circle cx="10" cy="2" r="1.200"/></g></svg></div>
  </nav>
</div>
<div class="h-[2px] shrink-0 bg-[#3f4c5a]"></div>

<!-- Input method bar -->
<div class="absolute right-[42px] bottom-[31px] flex h-[21px] w-[120px] items-center justify-between border border-[#b7cbe6] bg-white pr-1 pl-6 text-[#1268c9]">
  <svg class="absolute -left-[9px] size-[27px]" viewBox="0 0 27 27"><path d="M4 3l18-2q2 0 2.500 2L27 20q0 2-2 2.500L7 26q-2 0-2.500-2L1 6q0-2.500 3-3z" fill="#f4581c"/><path d="M21 7.500Q9 5.500 8 10t9 4.500q4 1 2 4t-12 1" fill="none" stroke="#fff" stroke-width="3.500"/></svg>
  <span class="text-[12px] font-bold">中</span>
  <svg class="h-3 w-[10px]" viewBox="0 0 10 12"><circle cx="2" cy="4" r="1.500" fill="none" stroke="currentColor"/><path d="M6.500 6h3v3L7 11.500V9h-.5z" fill="currentColor"/></svg>
  <svg class="h-[13px] w-[10px]" viewBox="0 0 10 13"><rect x="3" width="4" height="8" rx="2" fill="currentColor"/><path d="M.8 5.500q0 4.500 4.200 4.500t4.200-4.500M5 10v2.500M3 12.500h4" fill="none" stroke="currentColor" stroke-width="1.300"/></svg>
  <svg class="h-[10px] w-3" viewBox="0 0 12 10"><path d="M.6.6h10.800v8.800H.6z" fill="none" stroke="currentColor" stroke-width="1.300"/><path d="M2 3h8M2 5h8" stroke="currentColor" stroke-dasharray="1 1"/><path d="M3 7.500h6" stroke="currentColor"/></svg>
  <svg class="size-[11px]" viewBox="0 0 11 11"><g fill="currentColor"><rect width="5" height="5" rx="1"/><rect y="6" width="5" height="5" rx="1"/><rect x="6" y="6" width="5" height="5" rx="1"/></g><rect x="6.700" y=".7" width="3.600" height="3.600" rx=".8" fill="none" stroke="currentColor" stroke-width="1.300"/></svg>
</div>
<div class="absolute right-[14px] bottom-2 font-['Liberation_Sans'] text-[15px] text-[#85888d]">CSDN @Xxxx..Xxxx</div>

<!-- Callouts -->
<div class="pointer-events-none absolute inset-0 text-[21px] text-[#1e9bff]">
  <div class="absolute top-px left-0 h-[89px] w-[1209px] rounded-[3px] border-3 border-[#ff2312]"></div>
  <div class="absolute top-2 left-[9px] h-[27px] w-[55px] rounded-[3px] border-3 border-[#ff2312]"></div>
  <div class="absolute top-[7px] left-[67px] h-8 w-[163px] rounded-[3px] border-3 border-[#ff2312]"></div>
  <div class="absolute top-[35px] left-[254px] h-12 w-[111px] rounded-[3px] border-3 border-[#ff2312]"></div>
  <div class="absolute top-[34px] left-[366px] h-[49px] w-[209px] rounded-[3px] border-3 border-[#ff2312]"></div>
  <div class="absolute top-8 left-[583px] h-[53px] w-[273px] rounded-[3px] border-3 border-[#ff2312]"></div>
  <div class="absolute top-[114px] left-[9px] h-[663px] w-[222px] rounded-[3px] border-3 border-[#ff2312]"></div>
  <div class="absolute top-[176px] left-[277px] h-[526px] w-[984px] rounded-[3px] border-3 border-[#ff2312]"></div>
  <svg class="absolute top-0 left-0 h-[140px] w-[700px]" viewBox="0 0 700 140"><g fill="#ff2312"><path d="M176 45h3L231 90l7-1 5 18-19-5 3-5z"/><path d="M515 79l4 36 5-2-9 15-8-15 4 2z"/><path d="M651 84l-80 30-1-4-11 15 17 1-3-4z"/></g></svg>
  <svg class="absolute top-[304px] left-[797px] h-[27px] w-[17px]" viewBox="0 0 17 27"><path d="M1.500 1v20l4.500-4 4 8q2 1 3-1l-3.500-8h6z" fill="#fff" stroke="#222" stroke-width="1.500"/></svg>
  <span class="absolute top-[109px] left-[240px]">快速访问工具栏</span>
  <span class="absolute top-[122px] left-[492px]">功能组</span>
  <span class="absolute top-[25px] left-[1225px]">选项卡</span>
  <span class="absolute top-[270px] left-[25px]">幻灯片的缩略图区</span>
</div>
</body>
</html>
